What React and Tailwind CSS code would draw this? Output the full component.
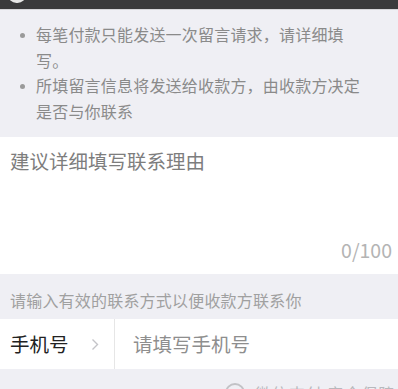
import React from 'react';

const tips = [
  '每笔付款只能发送一次留言请求，请详细填写。',
  '所填留言信息将发送给收款方，由收款方决定是否与你联系',
];

const App = () => {
  return (
    <div
      className="w-[398px] h-[389px] overflow-hidden bg-[#efeff4]"
      style={{ fontFamily: '"Noto Sans CJK SC", "Noto Sans", sans-serif' }}
    >
      {/* top bar */}
      <div className="relative h-[9px] bg-[#3a3a3c]">
        <div className="absolute left-[8px] top-[-14px] w-[18px] h-[17px] rounded-full bg-[#e6e6e6]" />
      </div>
      <div className="h-px bg-[#d6d6da]" />

      {/* tips */}
      <ul className="pt-[12px] pb-[13px] pr-[32px]">
        {tips.map((t, i) => (
          <li key={i} className="flex">
            <div className="w-[36px] shrink-0 flex justify-center pl-[8px] pt-[11px]">
              <div className="w-[5px] h-[5px] rounded-full bg-[#9a9a9a]" />
            </div>
            <p className="text-[16px] leading-[25.5px] tracking-[0.2px] text-[#8a8a8a]">{t}</p>
          </li>
        ))}
      </ul>

      {/* message box */}
      <div className="h-[137px] bg-white flex flex-col justify-between pt-[10px] pb-[12px] pl-[10px] pr-[6px]">
        <p className="text-[19.5px] leading-[28px] text-[#7d7d7d]">建议详细填写联系理由</p>
        <p className="self-end text-[19.5px] leading-[24px] text-[#b4b4b4]">0/100</p>
      </div>

      {/* hint */}
      <div className="pt-[16px] pb-[9px] pl-[10px]">
        <p className="text-[16px] leading-[20px] tracking-[0.2px] text-[#a0a0a0]">请输入有效的联系方式以便收款方联系你</p>
      </div>

      {/* phone row */}
      <div className="h-[50px] bg-white flex items-center">
        <div className="w-[115px] h-full flex items-center pl-[10px] border-r border-[#e6e6e6]">
          <span className="text-[19.5px] text-[#222]">手机号</span>
          <svg className="ml-[22px]" width="8" height="13" viewBox="0 0 8 13" fill="none">
            <polyline points="1.5,1.5 6.5,6.5 1.5,11.5" stroke="#c4c4c8" strokeWidth="1.4" />
          </svg>
        </div>
        <span className="pl-[18px] text-[19.5px] text-[#8e8e8e]">请填写手机号</span>
      </div>

      {/* footer */}
      <div className="flex items-start pl-[225px] pt-[14px]">
        <div className="w-[20px] h-[20px] rounded-full border-2 border-[#c2c2c6]" />
        <span className="ml-[10px] text-[16px] leading-[20px] text-[#b8b8bc] tracking-[1px]">微信支付 安全保障</span>
      </div>
    </div>
  );
};

export default App;
